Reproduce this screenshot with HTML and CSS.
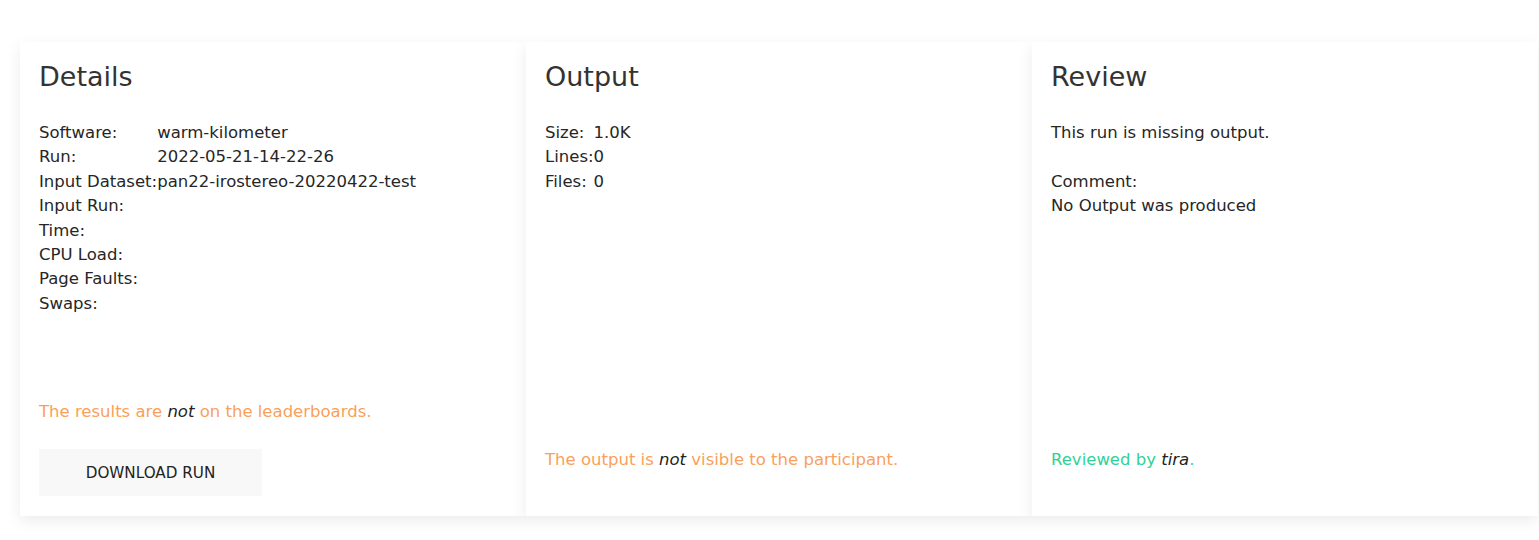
FILE: index.html
```html
<!DOCTYPE html>
<html lang="en">
<head>
<meta charset="utf-8">
<title>Run</title>
<link rel="stylesheet" href="styles.css">
</head>
<body>
<div class="page">
  <div class="cards">
    <section class="card">
      <h3 class="card-title">Details</h3>
      <div class="kv">
        <span>Software:</span><span>warm-kilometer</span>
        <span>Run:</span><span>2022-05-21-14-22-26</span>
        <span>Input Dataset:</span><span>pan22-irostereo-20220422-test</span>
        <span>Input Run:</span><span></span>
        <span>Time:</span><span></span>
        <span>CPU Load:</span><span></span>
        <span>Page Faults:</span><span></span>
        <span>Swaps:</span><span></span>
      </div>
      <div class="footer footer-details">
        <p class="warn">The results are <em>not</em> on the leaderboards.</p>
        <button class="btn">Download Run</button>
      </div>
    </section>
    <section class="card">
      <h3 class="card-title">Output</h3>
      <div class="kv">
        <span>Size:</span><span>1.0K</span>
        <span>Lines:</span><span>0</span>
        <span>Files:</span><span>0</span>
      </div>
      <div class="footer footer-note">
        <p class="warn">The output is <em>not</em> visible to the participant.</p>
      </div>
    </section>
    <section class="card">
      <h3 class="card-title">Review</h3>
      <p class="text gap">This run is missing output.</p>
      <p class="text">Comment:<br>No Output was produced</p>
      <div class="footer footer-note">
        <p class="ok">Reviewed by <em>tira</em>.</p>
      </div>
    </section>
  </div>
</div>
</body>
</html>
```

FILE: styles.css
```css
html, body {
  margin: 0;
  padding: 0;
  background: #fff;
}
body {
  font-family: "DejaVu Sans", Verdana, sans-serif;
  font-size: 16.5px;
  line-height: 24.4px;
  color: #262626;
}
.page {
  padding: 42px 1px 24px 20px;
}
.cards {
  display: grid;
  grid-template-columns: repeat(3, 506px);
}
.card {
  background: #fff;
  box-shadow: 0 5px 15px rgba(0, 0, 0, 0.08);
  height: 474px;
  box-sizing: border-box;
  padding: 20px 20px 20px 19px;
  display: flex;
  flex-direction: column;
}
.card-title {
  margin: 0 0 30px;
  font-size: 27px;
  line-height: 29px;
  font-weight: 400;
  color: #333;
}
.kv {
  display: grid;
  grid-template-columns: auto 1fr;
  justify-content: start;
}
.text {
  margin: 0;
}
.text.gap {
  margin-bottom: 24.4px;
}
.footer {
  margin-top: auto;
}
.footer p {
  margin: 0;
}
.footer-details .btn {
  margin-top: 25px;
}
.footer-note {
  padding-bottom: 24px;
}
.warn {
  color: #faa05a;
}
.ok {
  color: #32d296;
}
.footer em {
  color: #222;
  font-style: italic;
}
.btn {
  display: block;
  width: 223px;
  height: 47px;
  border: none;
  background: #f8f8f8;
  color: #222;
  font-family: inherit;
  font-size: 15.2px;
  text-transform: uppercase;
  padding: 0;
  cursor: pointer;
}
```
